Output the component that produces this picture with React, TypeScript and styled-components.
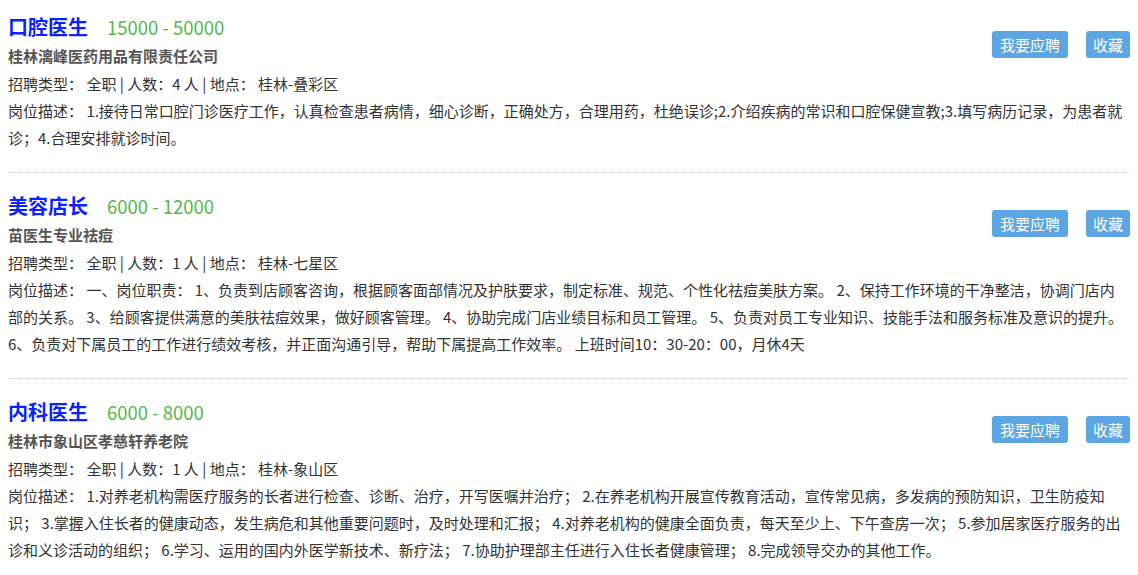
import styled, { createGlobalStyle } from "styled-components";

interface Job {
  id: number;
  title: string;
  salary: string;
  company: string;
  type: string;
  count: number;
  location: string;
  desc: string;
}

const jobs: Job[] = [
  {
    id: 1,
    title: "口腔医生",
    salary: "15000 - 50000",
    company: "桂林漓峰医药用品有限责任公司",
    type: "全职",
    count: 4,
    location: "桂林-叠彩区",
    desc: "1.接待日常口腔门诊医疗工作，认真检查患者病情，细心诊断，正确处方，合理用药，杜绝误诊;2.介绍疾病的常识和口腔保健宣教;3.填写病历记录，为患者就诊；4.合理安排就诊时间。",
  },
  {
    id: 2,
    title: "美容店长",
    salary: "6000 - 12000",
    company: "苗医生专业祛痘",
    type: "全职",
    count: 1,
    location: "桂林-七星区",
    desc: "一、岗位职责： 1、负责到店顾客咨询，根据顾客面部情况及护肤要求，制定标准、规范、个性化祛痘美肤方案。 2、保持工作环境的干净整洁，协调门店内部的关系。 3、给顾客提供满意的美肤祛痘效果，做好顾客管理。 4、协助完成门店业绩目标和员工管理。 5、负责对员工专业知识、技能手法和服务标准及意识的提升。 6、负责对下属员工的工作进行绩效考核，并正面沟通引导，帮助下属提高工作效率。 上班时间10：30-20：00，月休4天",
  },
  {
    id: 3,
    title: "内科医生",
    salary: "6000 - 8000",
    company: "桂林市象山区孝慈轩养老院",
    type: "全职",
    count: 1,
    location: "桂林-象山区",
    desc: "1.对养老机构需医疗服务的长者进行检查、诊断、治疗，开写医嘱并治疗； 2.在养老机构开展宣传教育活动，宣传常见病，多发病的预防知识，卫生防疫知识； 3.掌握入住长者的健康动态，发生病危和其他重要问题时，及时处理和汇报； 4.对养老机构的健康全面负责，每天至少上、下午查房一次； 5.参加居家医疗服务的出诊和义诊活动的组织； 6.学习、运用的国内外医学新技术、新疗法； 7.协助护理部主任进行入住长者健康管理； 8.完成领导交办的其他工作。",
  },
];

const GlobalStyle = createGlobalStyle`
  body {
    margin: 0;
    background: #fff;
    font-family: "Microsoft YaHei", "Noto Sans CJK SC", sans-serif;
    color: #333;
  }
`;

const List = styled.ul`
  list-style: none;
  margin: 0;
  padding: 0 8px;
`;

const Item = styled.li`
  padding: 18px 0 21px;
  border-bottom: 1px dotted #ccc;
  &:first-child {
    padding-top: 12px;
  }
`;

const Top = styled.div`
  display: flex;
  justify-content: space-between;
  align-items: flex-start;
`;

const TitleRow = styled.div`
  display: flex;
  align-items: baseline;
  height: 30px;
  line-height: 30px;
`;

const Title = styled.a`
  font-size: 20px;
  font-weight: bold;
  color: #0a22ff;
  text-decoration: none;
  cursor: pointer;
`;

const Salary = styled.span`
  margin-left: 19px;
  font-size: 18.5px;
  color: #55b849;
`;

const Company = styled.div`
  font-size: 15px;
  font-weight: bold;
  color: #555;
  line-height: 27.5px;
`;

const Line = styled.div`
  font-size: 15px;
  line-height: 27.5px;
`;

const Desc = styled.p`
  margin: 0;
  padding-right: 2px;
  font-size: 15px;
  line-height: 27px;
`;

const Actions = styled.div`
  display: flex;
  gap: 18px;
  margin-top: 18.5px;
`;

const Button = styled.button<{ $wide?: boolean }>`
  height: 27px;
  padding: 0 ${(p) => (p.$wide ? 8 : 7)}px;
  border: none;
  border-radius: 3px;
  background: #5ca6e3;
  color: #fff;
  font-family: inherit;
  font-size: 15px;
  line-height: 27px;
  cursor: pointer;
`;

export default function App() {
  return (
    <>
      <GlobalStyle />
      <List>
        {jobs.map((job) => (
          <Item key={job.id}>
            <Top>
              <div>
                <TitleRow>
                  <Title>{job.title}</Title>
                  <Salary>{job.salary}</Salary>
                </TitleRow>
                <Company>{job.company}</Company>
                <Line>
                  招聘类型： {job.type} | 人数：{job.count} 人 | 地点： {job.location}
                </Line>
              </div>
              <Actions>
                <Button $wide>我要应聘</Button>
                <Button>收藏</Button>
              </Actions>
            </Top>
            <Desc>岗位描述： {job.desc}</Desc>
          </Item>
        ))}
      </List>
    </>
  );
}
